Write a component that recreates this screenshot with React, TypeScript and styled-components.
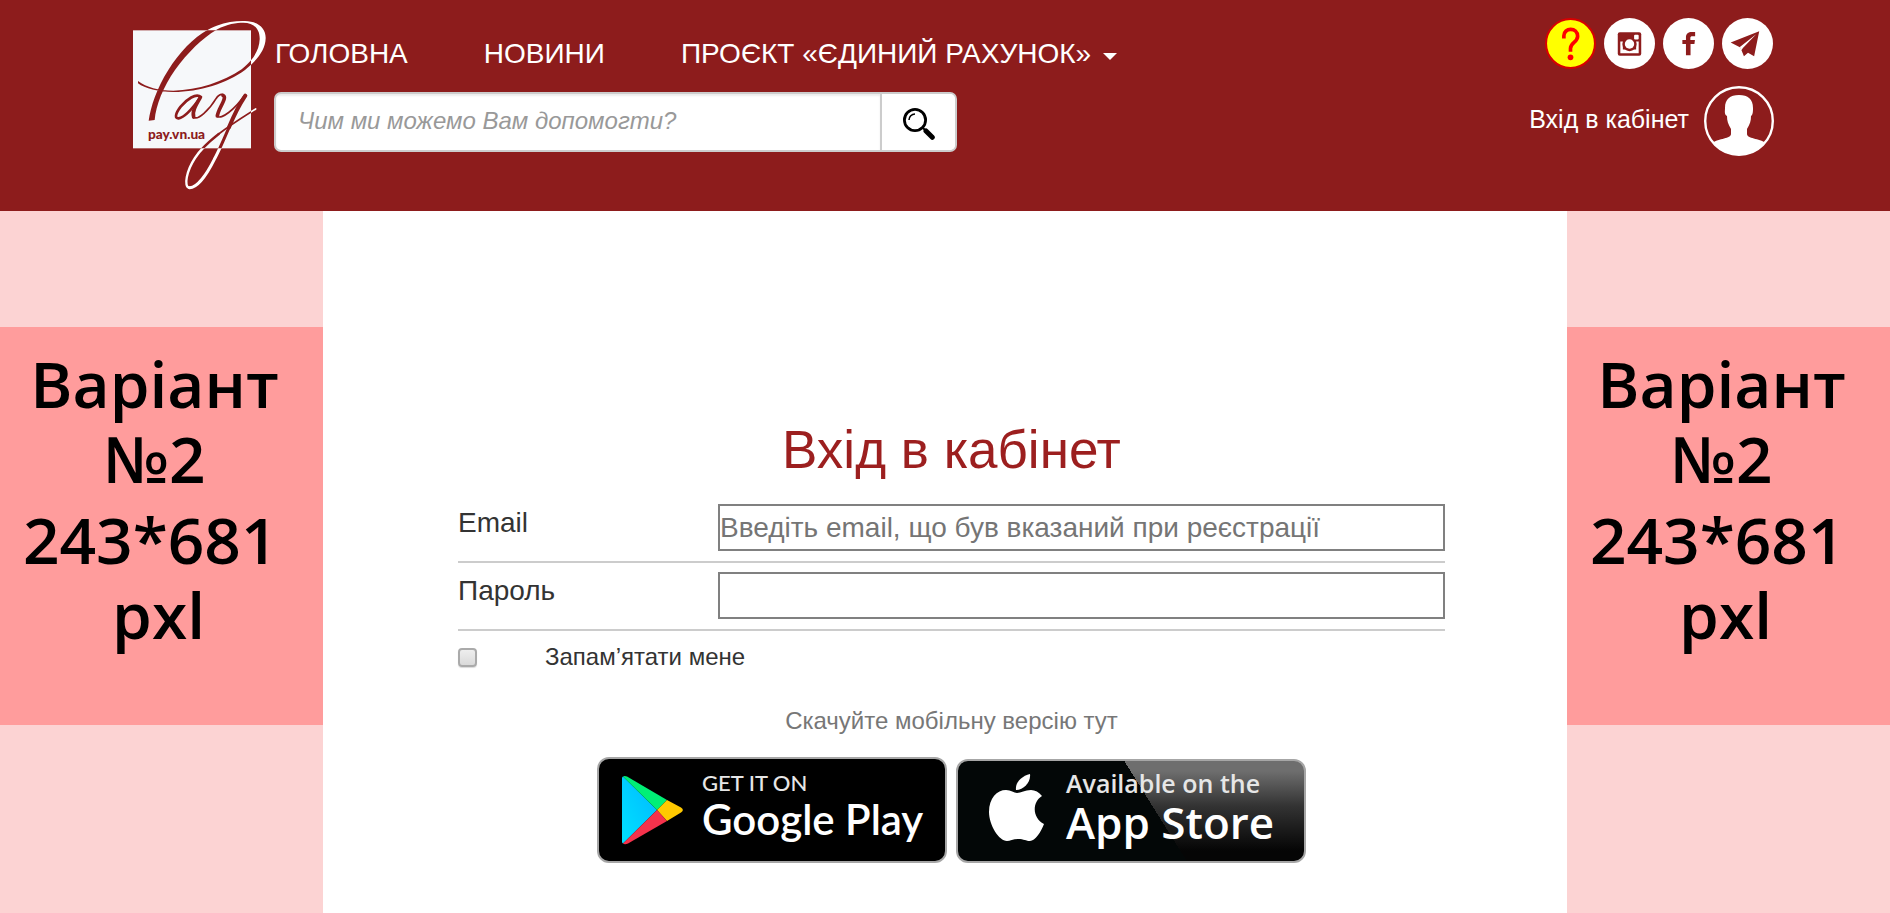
import React from 'react';
import styled, { createGlobalStyle } from 'styled-components';

const maroon = '#8d1c1c';

const GlobalStyle = createGlobalStyle`
  * { box-sizing: border-box; }
  html, body, #root { height: 100%; }
  body {
    margin: 0;
    background: #fff;
    color: #333;
    font-family: "Liberation Sans", Arial, sans-serif;
  }
`;

const Page = styled.div`
  min-height: 100%;
  display: flex;
  flex-direction: column;
`;

const Header = styled.header`
  display: flex;
  align-items: flex-start;
  padding: 18px 116px 21px 133px;
  background: ${maroon};
`;

const LogoLink = styled.a`
  display: block;
  flex: none;
  svg { display: block; }
`;

const HeaderCenter = styled.div`
  flex: 1;
  min-width: 0;
  padding: 20px 24px 0 7px;
`;

const Nav = styled.nav`
  display: flex;
  gap: 76px;
  padding-left: 1px;
`;

const NavLink = styled.a`
  display: flex;
  align-items: center;
  color: #fff;
  font-size: 28px;
  line-height: 32px;
  white-space: nowrap;
  text-decoration: none;
`;

const Caret = styled.span`
  margin: 4px 0 0 12px;
  border: 7px solid transparent;
  border-top-color: #fff;
  border-bottom-width: 0;
`;

const Search = styled.form`
  display: flex;
  max-width: 683px;
  height: 60px;
  margin-top: 22px;
  border: 2px solid #ccc;
  border-radius: 7px;
  background: #fff;
  overflow: hidden;
`;

const SearchInput = styled.input`
  flex: 1;
  min-width: 0;
  padding: 0 22px 2px;
  border: 0;
  background: transparent;
  box-shadow: inset 0 2px 2px rgba(0, 0, 0, 0.08);
  font: italic 24px "Liberation Sans", Arial, sans-serif;
  &::placeholder { color: #999; opacity: 1; }
`;

const SearchButton = styled.button`
  flex: 0 0 75px;
  display: flex;
  align-items: center;
  justify-content: center;
  padding: 4px 0 0;
  border: 0;
  border-left: 2px solid #ccc;
  background: #fff;
`;

const HeaderSide = styled.div`
  display: flex;
  flex-direction: column;
  align-items: flex-end;
  gap: 17px;
`;

const Socials = styled.div`
  display: flex;
  gap: 8px;
  padding-right: 1px;
`;

const RoundLink = styled.a`
  display: block;
  width: 51px;
  height: 51px;
  svg { display: block; width: 100%; height: 100%; }
`;

const AccountLink = styled.a`
  display: flex;
  align-items: center;
  gap: 15px;
  color: #fff;
  font-size: 25px;
  line-height: 30px;
  text-decoration: none;
  white-space: nowrap;
  span { padding-bottom: 4px; }
`;

const Body = styled.div`
  flex: 1;
  display: flex;
  background: #fff;
`;

const Side = styled.aside`
  flex: 0 0 323px;
  padding-top: 116px;
  background: #fcd3d3;
`;

const Banner = styled.div`
  padding: 19px 14px 73px 0;
  background: #ff9c9c;
  color: #000;
  font-family: "Open Sans", "Noto Sans", sans-serif;
  font-size: 64px;
  font-weight: 600;
  line-height: 75px;
  text-align: center;
  white-space: pre;
`;

const BannerLines = styled.p`
  margin: 0;
  & + & { margin-top: 6px; padding-left: 8px; }
`;

const Main = styled.main`
  flex: 1;
  min-width: 0;
  padding: 209px 122px 40px 135px;
`;

const Title = styled.h1`
  margin: 0 0 15px;
  color: #9c1f1f;
  font-size: 53px;
  font-weight: 400;
  line-height: 60px;
  text-align: center;
`;

const Field = styled.div`
  display: flex;
  padding: 9px 0 10px;
  border-bottom: 2px solid #ccc;
`;

const FieldLabel = styled.label`
  flex: 0 0 260px;
  font-size: 28px;
  line-height: 38px;
`;

const FieldInput = styled.input`
  flex: 1;
  min-width: 0;
  height: 47px;
  padding: 0;
  border: 2px solid #808080;
  border-radius: 0;
  background: #fff;
  font: 28px "Liberation Sans", Arial, sans-serif;
  &::placeholder { color: #757575; opacity: 1; }
`;

const Remember = styled.div`
  display: flex;
  align-items: center;
  gap: 68px;
  margin-top: 11px;
  font-size: 24px;
  line-height: 30px;
`;

const Checkbox = styled.input`
  appearance: none;
  width: 19px;
  height: 19px;
  margin: 0;
  border: 2px solid #aaa;
  border-radius: 4px;
  background: linear-gradient(#eee, #dadada);
  box-shadow: 0 1px 1px rgba(0, 0, 0, 0.15);
`;

const AppsNote = styled.p`
  margin: 34px 0 21px;
  color: #777;
  font-size: 24px;
  line-height: 30px;
  text-align: center;
`;

const Badges = styled.div`
  display: flex;
  justify-content: center;
  align-items: flex-end;
  gap: 9px;
`;

const Badge = styled.a<{ $tall?: boolean; $glossy?: boolean }>`
  display: flex;
  align-items: center;
  width: 350px;
  height: ${p => (p.$tall ? 106 : 104)}px;
  border: 2px solid #a6a6a6;
  border-radius: 12px;
  background: ${p =>
    p.$glossy
      ? 'linear-gradient(58deg, #030707 56%, transparent 56%), linear-gradient(#6e6e6e 10%, #333 45%, #050505 90%)'
      : '#000'};
  color: #fff;
  text-decoration: none;
  white-space: nowrap;
`;

const BadgeIcon = styled.span<{ $inset: number; $width: number }>`
  flex: none;
  width: ${p => p.$width}px;
  margin-left: ${p => p.$inset}px;
  svg { display: block; }
`;

const BadgeText = styled.span`
  display: flex;
  flex-direction: column;
  padding-bottom: 8px;
  font-weight: 600;
  small { color: #e6e6e6; }
`;

const GoogleText = styled(BadgeText)`
  font-family: Lato, sans-serif;
  font-size: 42px;
  line-height: 46px;
  small { font-size: 22px; font-weight: 500; line-height: 26px; }
`;

const AppleText = styled(BadgeText)`
  font-family: "Open Sans", sans-serif;
  font-size: 44px;
  line-height: 48px;
  small { font-size: 25px; line-height: 30px; }
`;

function Swash({ color }: { color: string }) {
  return (
    <g fill="none" stroke={color} strokeLinecap="round" strokeLinejoin="round">
      <path
        fill={color}
        stroke="none"
        d="M86 332C92 290 110 235 145 180C185 115 240 65 290 47C320 36 350 32 375 33C415 34 438 55 437 85C436 120 412 150 375 180C320 220 240 246 160 246C115 246 75 236 54 220L54 213C80 232 115 242 160 242C235 241 310 215 365 178C400 150 418 120 419 88C420 55 400 38 370 38C350 38 320 42 292 58C250 82 205 125 165 180C130 230 108 285 104 330Z"
      />
      <path strokeWidth="8" d="M243 261C228 248 200 268 182 290C165 312 164 326 176 325C195 322 220 292 240 264" />
      <path strokeWidth="11" d="M240 264C226 288 216 305 221 321" />
      <path strokeWidth="5" d="M221 321C232 333 268 300 288 266C296 254 304 252 310 254" />
      <path strokeWidth="11" d="M309 256C324 262 294 296 292 318" />
      <path strokeWidth="5" d="M292 318C302 332 346 296 372 258" />
      <path strokeWidth="12" d="M376 257C358 284 336 330 327 352" />
      <path strokeWidth="9" d="M327 352C310 392 296 424 283 448C262 490 232 534 208 533" />
      <path strokeWidth="7" d="M208 533C190 530 200 482 225 444C244 414 268 394 296 372" />
      <path strokeWidth="5" d="M296 372C330 345 370 320 407 297" />
    </g>
  );
}

function Logo() {
  return (
    <svg width="134" height="172" viewBox="39 24 402 516" role="img" aria-label="Pay">
      <clipPath id="logo-square"><rect x="39" y="61" width="354" height="354" /></clipPath>
      <Swash color="#fff" />
      <rect x="39" y="61" width="354" height="354" fill="#f6f8fa" />
      <g clipPath="url(#logo-square)"><Swash color={maroon} /></g>
      <text x="84" y="386" fill={maroon} fontFamily="Lato, sans-serif" fontSize="41" fontWeight="900">pay.vn.ua</text>
    </svg>
  );
}

function SearchIcon() {
  return (
    <svg width="32" height="32" viewBox="0 0 32 32" aria-hidden="true">
      <circle cx="12" cy="12" r="10.6" fill="none" stroke="#000" strokeWidth="2.8" />
      <path d="M6 12A6 6 0 0 1 12 6" fill="none" stroke="#000" strokeWidth="1.6" />
      <path d="M19.5 19.5L22 22" stroke="#000" strokeWidth="2" />
      <path d="M23 23L29.300 29.300" stroke="#000" strokeWidth="5" strokeLinecap="round" />
    </svg>
  );
}

function HelpIcon() {
  return (
    <svg viewBox="0 0 50 50" aria-hidden="true">
      <circle cx="25" cy="25" r="24" fill="#ff0" stroke="#d80000" strokeWidth="2" />
      <path d="M18.500 20V17.500C18.500 9 32 9 32 18C32 24 25 24 25 30V33" fill="none" stroke="#f00" strokeWidth="3.600" />
      <circle cx="25" cy="38.500" r="2.800" fill="#f00" />
    </svg>
  );
}

function InstagramIcon() {
  return (
    <svg viewBox="0 0 50 50" aria-hidden="true">
      <circle cx="25" cy="25" r="25" fill="#fff" />
      <rect x="13.500" y="14" width="23" height="23" rx="2" fill={maroon} />
      <path d="M16 23H18.500V34.500H16ZM31.500 23H34V34.500H31.500ZM16 31H34V34.500H16Z" fill="#fff" />
      <circle cx="25" cy="25.500" r="7" fill={maroon} />
      <circle cx="25" cy="25.500" r="4.600" fill="#fff" />
      <rect x="29.500" y="16.500" width="4.500" height="4.500" rx="1" fill="#fff" />
    </svg>
  );
}

function FacebookIcon() {
  return (
    <svg viewBox="0 0 50 50" aria-hidden="true">
      <circle cx="25" cy="25" r="25" fill="#fff" />
      <path d="M22.500 36.500V25.500H19V21.500H22.500V19C22.500 15.500 25 13.800 28 13.800H31.500V18H29C27.300 18 26.800 18.600 26.800 20V21.500H31.300L30.800 25.500H27V36.500Z" fill={maroon} />
    </svg>
  );
}

function TelegramIcon() {
  return (
    <svg viewBox="0 0 50 50" aria-hidden="true">
      <circle cx="25" cy="25" r="25" fill="#fff" />
      <path d="M8.500 24L36.500 13L31.500 37.500L25.500 34L21.500 37.500L18 29Z" fill={maroon} />
      <path d="M33.500 16L17.500 28.500L19 31.500L20.500 29.500Z" fill="#fff" />
    </svg>
  );
}

function AvatarIcon() {
  return (
    <svg width="70" height="70" viewBox="0 0 70 70" aria-hidden="true">
      <clipPath id="avatar-ring"><circle cx="35" cy="35" r="34" /></clipPath>
      <path
        clipPath="url(#avatar-ring)"
        fill="#fff"
        d="M8 57C15 52 27 53 27 48V43C24 38 23 35 23 30C20 29 21 25 21 22C21 13 26 9 35 9C44 9 49 13 49 22C49 25 49 29 47 30C47 35 46 38 43 43V48C43 53 55 52 62 57V72H8Z"
      />
      <circle cx="35" cy="35" r="33.800" fill="none" stroke="#fff" strokeWidth="2.400" />
    </svg>
  );
}

function PlayIcon() {
  return (
    <svg width="62" height="70" viewBox="0 0 62 70" aria-hidden="true">
      <linearGradient id="play-blue" x1="1" y1="0" x2="0" y2="1">
        <stop offset="0" stopColor="#00b8ff" />
        <stop offset="1" stopColor="#00e1ff" />
      </linearGradient>
      <path d="M1 1.500C0 2 0 3 0 4V66C0 67 0 68 1 68.500L35 35Z" fill="url(#play-blue)" />
      <path d="M1 1.500C2 .5 4 1 5 1.500L45 25L35 35Z" fill="#00ef76" />
      <path d="M45 25L59 32.500C61.500 34 61.500 36 59 37.500L45 46L35 35Z" fill="#ffc900" />
      <path d="M1 68.500C2 69.500 4 69.500 6 68.500L45 46L35 35Z" fill="#f5324c" />
    </svg>
  );
}

function AppleIcon() {
  return (
    <svg width="56" height="74" viewBox="0 0 56 74" aria-hidden="true">
      <path d="M41 0C42 8 35 16 27 16C26 8 33 2 41 0Z" fill="#fff" />
      <path d="M28 19C32 19 36 16 42 16C46 16 50 18 53 22C43 28 43 44 55 50C52 58 46 67 41 67C37 67 35 65 29 65C24 65 21 67 18 67C10 67 0 51 0 38C0 24 8 16 17 16C22 16 25 19 28 19Z" fill="#fff" />
    </svg>
  );
}

function SideBanner() {
  return (
    <Side>
      <Banner>
        <BannerLines>{'Варіант\n№2'}</BannerLines>
        <BannerLines>{'243*681 \npxl'}</BannerLines>
      </Banner>
    </Side>
  );
}

export default function App() {
  return (
    <Page>
      <GlobalStyle />
      <Header>
        <LogoLink href="#"><Logo /></LogoLink>
        <HeaderCenter>
          <Nav>
            <NavLink href="#">ГОЛОВНА</NavLink>
            <NavLink href="#">НОВИНИ</NavLink>
            <NavLink href="#">ПРОЄКТ «ЄДИНИЙ РАХУНОК»<Caret /></NavLink>
          </Nav>
          <Search role="search" onSubmit={e => e.preventDefault()}>
            <SearchInput type="text" aria-label="Пошук" placeholder="Чим ми можемо Вам допомогти?" />
            <SearchButton type="submit" aria-label="Знайти"><SearchIcon /></SearchButton>
          </Search>
        </HeaderCenter>
        <HeaderSide>
          <Socials>
            <RoundLink href="#" aria-label="Допомога"><HelpIcon /></RoundLink>
            <RoundLink href="#" aria-label="Instagram"><InstagramIcon /></RoundLink>
            <RoundLink href="#" aria-label="Facebook"><FacebookIcon /></RoundLink>
            <RoundLink href="#" aria-label="Telegram"><TelegramIcon /></RoundLink>
          </Socials>
          <AccountLink href="#"><span>Вхід в кабінет</span><AvatarIcon /></AccountLink>
        </HeaderSide>
      </Header>
      <Body>
        <SideBanner />
        <Main>
          <Title>Вхід в кабінет</Title>
          <form onSubmit={e => e.preventDefault()}>
            <Field>
              <FieldLabel htmlFor="email">Email</FieldLabel>
              <FieldInput id="email" type="email" placeholder="Введіть email, що був вказаний при реєстрації" />
            </Field>
            <Field>
              <FieldLabel htmlFor="password">Пароль</FieldLabel>
              <FieldInput id="password" type="password" />
            </Field>
            <Remember>
              <Checkbox id="remember" type="checkbox" />
              <label htmlFor="remember">Запам’ятати мене</label>
            </Remember>
          </form>
          <AppsNote>Скачуйте мобільну версію тут</AppsNote>
          <Badges>
            <Badge href="#" $tall>
              <BadgeIcon $inset={23} $width={80}><PlayIcon /></BadgeIcon>
              <GoogleText><small>GET IT ON</small>Google Play</GoogleText>
            </Badge>
            <Badge href="#" $glossy>
              <BadgeIcon $inset={31} $width={77}><AppleIcon /></BadgeIcon>
              <AppleText><small>Available on the</small>App Store</AppleText>
            </Badge>
          </Badges>
        </Main>
        <SideBanner />
      </Body>
    </Page>
  );
}
